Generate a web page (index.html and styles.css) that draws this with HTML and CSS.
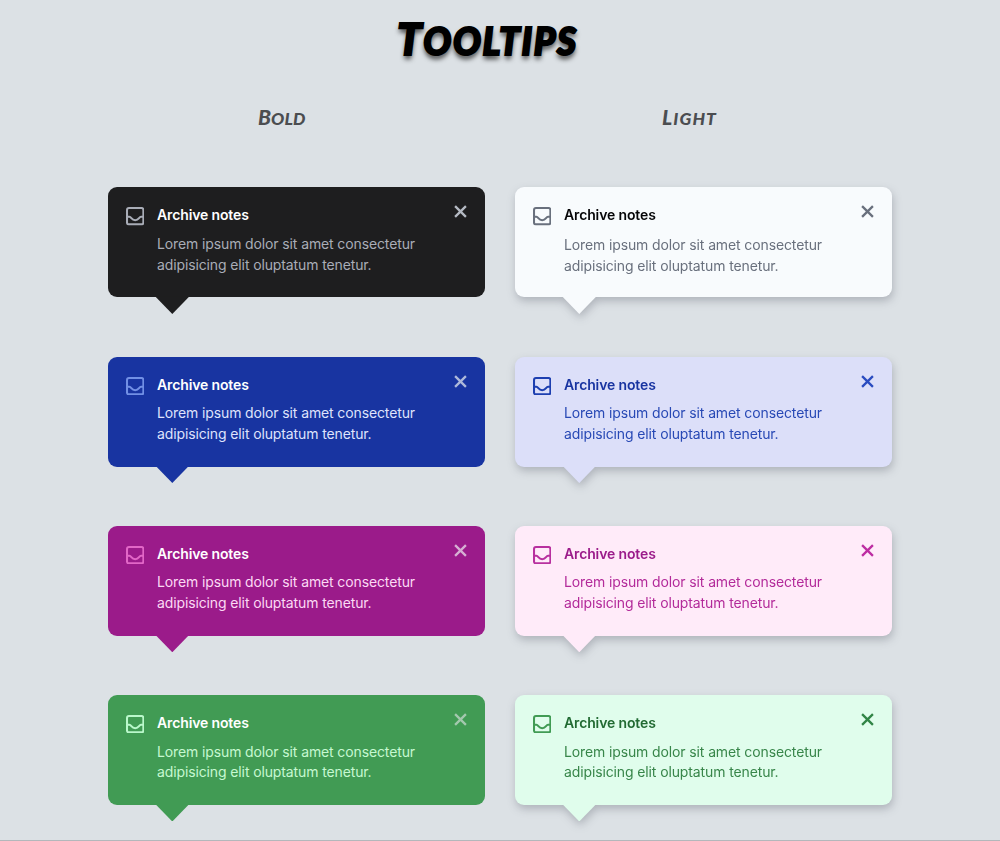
FILE: index.html
```
<!DOCTYPE html>
<html lang="en">
<head>
<meta charset="utf-8">
<title>Tooltips</title>
<link rel="stylesheet" href="styles.css">
</head>
<body>
<svg class="sprite" aria-hidden="true">
  <symbol id="inbox" viewBox="0 0 18 18"><rect x="1" y="1" width="16" height="16" rx="1.9"/><path d="M1 9.6H3.3C5.4 9.6 5.2 12.9 9 12.9S12.6 9.6 14.7 9.6H17"/></symbol>
  <symbol id="close" viewBox="0 0 12 12"><path d="M1 1L11 11M11 1L1 11"/></symbol>
</svg>
<h1 class="title">Tooltips</h1>
<div class="headings"><h2 class="heading">Bold</h2><h2 class="heading heading-light">Light</h2></div>
<main class="grid">
  <article class="tip dark"><svg class="icon"><use href="#inbox"/></svg><div class="copy"><h3>Archive notes</h3><p>Lorem ipsum dolor sit amet consectetur adipisicing elit oluptatum tenetur.</p></div><svg class="close"><use href="#close"/></svg></article>
  <article class="tip light white"><svg class="icon"><use href="#inbox"/></svg><div class="copy"><h3>Archive notes</h3><p>Lorem ipsum dolor sit amet consectetur adipisicing elit oluptatum tenetur.</p></div><svg class="close"><use href="#close"/></svg></article>
  <article class="tip blue"><svg class="icon"><use href="#inbox"/></svg><div class="copy"><h3>Archive notes</h3><p>Lorem ipsum dolor sit amet consectetur adipisicing elit oluptatum tenetur.</p></div><svg class="close"><use href="#close"/></svg></article>
  <article class="tip light lavender"><svg class="icon"><use href="#inbox"/></svg><div class="copy"><h3>Archive notes</h3><p>Lorem ipsum dolor sit amet consectetur adipisicing elit oluptatum tenetur.</p></div><svg class="close"><use href="#close"/></svg></article>
  <article class="tip magenta"><svg class="icon"><use href="#inbox"/></svg><div class="copy"><h3>Archive notes</h3><p>Lorem ipsum dolor sit amet consectetur adipisicing elit oluptatum tenetur.</p></div><svg class="close"><use href="#close"/></svg></article>
  <article class="tip light pink"><svg class="icon"><use href="#inbox"/></svg><div class="copy"><h3>Archive notes</h3><p>Lorem ipsum dolor sit amet consectetur adipisicing elit oluptatum tenetur.</p></div><svg class="close"><use href="#close"/></svg></article>
  <article class="tip green"><svg class="icon"><use href="#inbox"/></svg><div class="copy"><h3>Archive notes</h3><p>Lorem ipsum dolor sit amet consectetur adipisicing elit oluptatum tenetur.</p></div><svg class="close"><use href="#close"/></svg></article>
  <article class="tip light mint"><svg class="icon"><use href="#inbox"/></svg><div class="copy"><h3>Archive notes</h3><p>Lorem ipsum dolor sit amet consectetur adipisicing elit oluptatum tenetur.</p></div><svg class="close"><use href="#close"/></svg></article>
</main>
</body>
</html>
```
FILE: styles.css
```
* { box-sizing: border-box; }
body { margin: 0; height: 841px; overflow: hidden; background: #dce1e5; border-bottom: 1px solid #b3b7bb; font-family: Inter, sans-serif; }
h1, h2, h3, p { margin: 0; }
.sprite { display: none; }
.title, .heading { font-family: Lato, sans-serif; font-style: italic; text-transform: uppercase; white-space: nowrap; }
.title { height: 84px; padding: 9px 0 0 397px; font-size: 37px; line-height: 58px; font-weight: 900; letter-spacing: 1.6px; color: #000; -webkit-text-stroke: 2px #000; text-shadow: 0 4px 5px rgba(0, 0, 0, .75); }
.title::first-letter { font-size: 44px; }
.headings { display: flex; height: 103.4px; padding: 18px 108px 0; gap: 30px; }
.heading { width: 377px; padding-left: 150px; font-size: 17.5px; line-height: 30px; font-weight: 900; letter-spacing: .1px; color: #4b4d50; }
.heading::first-letter { font-size: 21px; }
.heading-light { padding-left: 147px; letter-spacing: 1.1px; }
.grid { display: grid; grid-template-columns: 377.4px 377.4px; grid-auto-rows: 110px; column-gap: 29.6px; row-gap: 59.2px; padding-left: 107.8px; }
.tip { position: relative; display: flex; align-items: flex-start; padding: 20px 18px 20px 18px; border-radius: 9px; background: var(--bg); }
.tip::after { content: ""; position: absolute; left: 47.5px; top: calc(100% - 1px); width: 34px; height: 17.5px; background: var(--bg); clip-path: polygon(0 0, 100% 0, 50% 100%); }
.light { filter: drop-shadow(1px 4px 4px rgba(40, 42, 60, .25)); }
.icon { width: 18.4px; height: 18.4px; flex: none; fill: none; stroke: var(--icon); stroke-width: 2; }
.copy { flex: 1; padding-left: 12.8px; }
h3 { font-size: 14px; line-height: 16px; font-weight: 600; letter-spacing: -.13px; color: var(--head); }
p { width: 275px; margin-top: 10.6px; font-size: 14px; line-height: 20.8px; letter-spacing: -.12px; color: var(--text); }
.white p { margin-top: 11.6px; }
.close { width: 13px; height: 13px; flex: none; margin-top: -2px; fill: none; stroke: var(--close); stroke-width: 2.1; }
.dark { --bg: #1e1e1f; --icon: #a9adb7; --head: #fff; --text: #a9adb7; --close: #b5bac3; }
.white { --bg: #f8fbfd; --icon: #69707d; --head: #050507; --text: #69707d; --close: #69707d; }
.blue { --bg: #1834a1; --icon: #7290e5; --head: #fff; --text: #dfe3fc; --close: #aeb9da; }
.lavender { --bg: #dcdff9; --icon: #1d3fb0; --head: #1834a1; --text: #2849b5; --close: #2a4cc0; }
.magenta { --bg: #9b1b8a; --icon: #e267c7; --head: #fff; --text: #fbd9f4; --close: #d6afd3; }
.pink { --bg: #ffebf9; --icon: #b8309f; --head: #9b1b8a; --text: #b32b9a; --close: #bd2da2; }
.green { --bg: #419b54; --icon: #baf8cb; --head: #fff; --text: #c6f8d1; --close: #a3c8ae; }
.mint { --bg: #e0fdec; --icon: #419b54; --head: #216a32; --text: #38864a; --close: #318546; }
```
